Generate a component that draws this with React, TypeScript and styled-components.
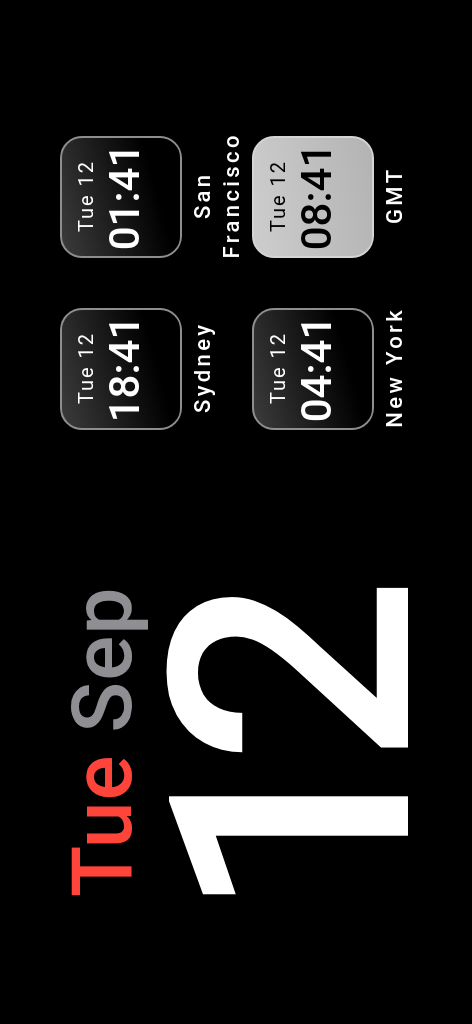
import React from 'react';
import styled, { createGlobalStyle, css } from 'styled-components';

const GlobalStyle = createGlobalStyle`
  html, body {
    margin: 0;
    padding: 0;
    background: #000;
    overflow: hidden;
  }
  body {
    font-family: Roboto, "Liberation Sans", sans-serif;
  }
`;

// the whole screen is a landscape layout turned on its side
const Stage = styled.main`
  position: fixed;
  top: 0;
  left: 0;
  width: 1024px;
  height: 472px;
  box-sizing: border-box;
  padding: 60px 136px 0 127px;
  transform-origin: top left;
  transform: translateY(1024px) rotate(-90deg);
  background: #000;
  display: flex;
  justify-content: space-between;
  align-items: flex-start;
`;

const DateBlock = styled.section`
  display: flex;
  flex-direction: column;
  margin-top: 1px;
`;

const DateLine = styled.div`
  font-size: 84px;
  line-height: 84px;
  font-weight: 500;
  letter-spacing: 1px;
  white-space: nowrap;
`;

const Weekday = styled.span`
  color: #ff453a;
`;

const Month = styled.span`
  color: #8e8e93;
`;

const DayNumber = styled.div`
  font-size: 335px;
  line-height: 1;
  font-weight: 500;
  color: #fff;
  margin: -19px 0 0 -25px;
  letter-spacing: -34px;
  padding-right: 34px;
  white-space: nowrap;
`;

const ClockGrid = styled.section`
  display: grid;
  grid-template-columns: 122px 122px;
  column-gap: 50px;
  row-gap: 6px;
`;

const Clock = styled.div`
  display: flex;
  flex-direction: column;
  align-items: center;
  gap: 6px;
`;

const Tile = styled.div<{ $active?: boolean }>`
  width: 122px;
  height: 122px;
  box-sizing: border-box;
  border-radius: 22px;
  padding-top: 12px;
  display: flex;
  flex-direction: column;
  align-items: center;
  gap: 5px;
  ${({ $active }) =>
    $active
      ? css`
          border: 2px solid #d4d4d4;
          background: linear-gradient(170deg, #cdcdcd 0%, #b3b3b3 100%);
          color: #000;
        `
      : css`
          border: 2px solid #8e8e8e;
          background: linear-gradient(165deg, #3c3c3c 0%, #141414 50%, #000 75%);
          color: #fff;
        `}
`;

const TileDate = styled.div`
  font-size: 20px;
  line-height: 24px;
  letter-spacing: 2px;
  padding-left: 2px;
  white-space: nowrap;
`;

const TileTime = styled.div`
  font-size: 42px;
  line-height: 44px;
  font-weight: 500;
  white-space: nowrap;
`;

const CityName = styled.div`
  color: #fff;
  font-size: 22px;
  line-height: 29px;
  font-weight: 500;
  letter-spacing: 3.4px;
  padding-left: 3.4px;
  text-align: center;
  white-space: nowrap;
`;

const clocks = [
  { city: ['Sydney'], time: '18:41' },
  { city: ['San', 'Francisco'], time: '01:41' },
  { city: ['New York'], time: '04:41' },
  { city: ['GMT'], time: '08:41', active: true },
];

export default function App(): JSX.Element {
  return (
    <>
      <GlobalStyle />
      <Stage>
        <DateBlock>
          <DateLine>
            <Weekday>Tue</Weekday> <Month>Sep</Month>
          </DateLine>
          <DayNumber>12</DayNumber>
        </DateBlock>
        <ClockGrid>
          {clocks.map(({ city, time, active }) => (
            <Clock key={city.join(' ')}>
              <Tile $active={active}>
                <TileDate>Tue 12</TileDate>
                <TileTime>{time}</TileTime>
              </Tile>
              <CityName>
                {city.map((line) => (
                  <div key={line}>{line}</div>
                ))}
              </CityName>
            </Clock>
          ))}
        </ClockGrid>
      </Stage>
    </>
  );
}
